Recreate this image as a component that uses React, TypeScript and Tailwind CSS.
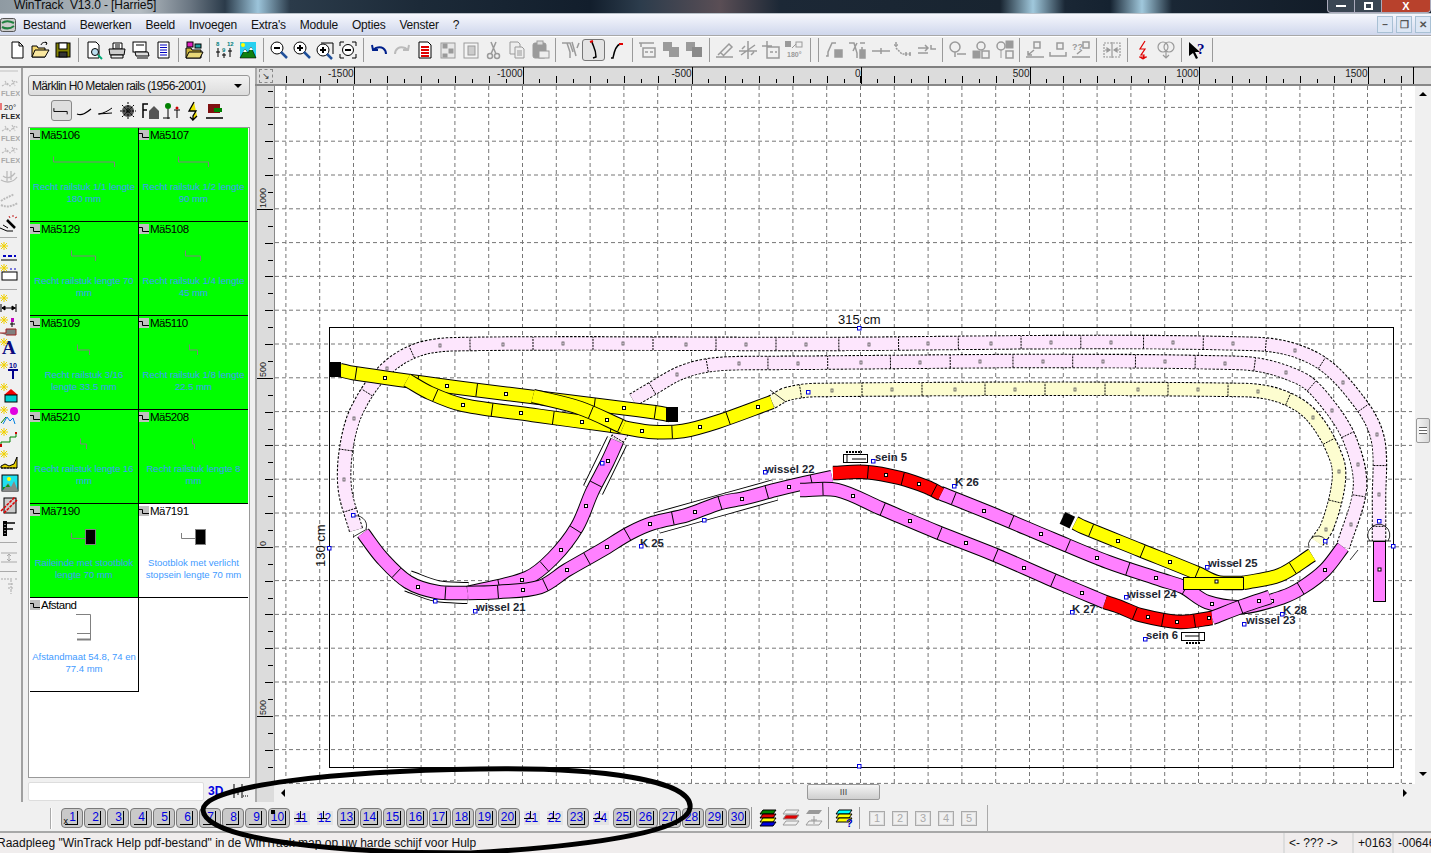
import type { ReactNode } from "react";

const FONT = "font-['Liberation_Sans',Arial,sans-serif]";
const G = "#9a9a9a";

type Pt = [number, number];

// smooth line through the points, also returns samples for the sleepers
function spline(pts: Pt[]) {
  let d = `M${pts[0][0]} ${pts[0][1]}`;
  const samples: Pt[] = [];
  const tangent = (a: Pt, b: Pt): Pt => {
    const l = Math.hypot(b[0] - a[0], b[1] - a[1]) || 1;
    return [(b[0] - a[0]) / l, (b[1] - a[1]) / l];
  };
  for (let i = 0; i < pts.length - 1; i++) {
    const p0 = pts[Math.max(i - 1, 0)];
    const p1 = pts[i];
    const p2 = pts[i + 1];
    const p3 = pts[Math.min(i + 2, pts.length - 1)];
    const len = Math.hypot(p2[0] - p1[0], p2[1] - p1[1]) / 3;
    const t1 = tangent(p0, p2);
    const t2 = tangent(p1, p3);
    const c1: Pt = [p1[0] + t1[0] * len, p1[1] + t1[1] * len];
    const c2: Pt = [p2[0] - t2[0] * len, p2[1] - t2[1] * len];
    d += ` C${c1[0]} ${c1[1]} ${c2[0]} ${c2[1]} ${p2[0]} ${p2[1]}`;
    const steps = Math.max(8, Math.ceil(len));
    for (let k = 0; k < steps; k++) {
      const t = k / steps;
      const u = 1 - t;
      samples.push([
        u * u * u * p1[0] + 3 * u * u * t * c1[0] + 3 * u * t * t * c2[0] + t * t * t * p2[0],
        u * u * u * p1[1] + 3 * u * u * t * c1[1] + 3 * u * t * t * c2[1] + t * t * t * p2[1],
      ]);
    }
  }
  samples.push(pts[pts.length - 1]);
  return { d, samples };
}

function Track({ pts, color, faded, seg = 61, start = 0, w = 13 }: { pts: Pt[]; color: string; faded?: boolean; seg?: number; start?: number; w?: number }) {
  const { d, samples } = spline(pts);
  const marks: ReactNode[] = [];
  let dist = 0;
  let next = start;
  let half = start + seg / 2;
  for (let i = 1; i < samples.length; i++) {
    const [x0, y0] = samples[i - 1];
    const [x1, y1] = samples[i];
    const len = Math.hypot(x1 - x0, y1 - y0);
    dist += len;
    const nx = -(y1 - y0) / (len || 1);
    const ny = (x1 - x0) / (len || 1);
    if (dist >= next) {
      marks.push(
        <line key={`t${i}`} x1={x1 + (nx * w) / 2} y1={y1 + (ny * w) / 2} x2={x1 - (nx * w) / 2} y2={y1 - (ny * w) / 2} stroke="#000" strokeWidth="1" strokeDasharray={faded ? "2 1" : undefined} />,
      );
      next += seg;
    }
    if (dist >= half) {
      marks.push(
        faded ? (
          <rect key={`s${i}`} x={Math.round(x1) - 1} y={Math.round(y1) - 1} width="2" height="3" fill="none" stroke="#555" strokeWidth="0.8" />
        ) : (
          <rect key={`s${i}`} x={Math.round(x1) - 1.5} y={Math.round(y1) - 1.5} width="3" height="3" fill="#fff" stroke="#000" strokeWidth="1" />
        ),
      );
      half += seg;
    }
  }
  return (
    <g fill="none">
      <path d={d} stroke="#000" strokeWidth={w + 1.5} strokeDasharray={faded ? "2.5 1.5" : undefined} />
      <path d={d} stroke={color} strokeWidth={w - 0.5} />
      {marks}
    </g>
  );
}

// contact rail: white sleeve drawn under a track
function Sleeve({ pts }: { pts: Pt[] }) {
  const { d } = spline(pts);
  return (
    <g fill="none">
      <path d={d} stroke="#000" strokeWidth="22" />
      <path d={d} stroke="#fff" strokeWidth="20" />
    </g>
  );
}

const Handle = ({ x, y }: { x: number; y: number }) => <rect x={x - 1.5} y={y - 1.5} width="3.5" height="3.5" fill="#fff" stroke="#0000e0" strokeWidth="1" />;

const labels: [string, number, number, number, number][] = [
  ["wissel 21", 476, 611, 475, 611],
  ["K 25", 640, 547, 641, 546],
  ["wissel 22", 765, 473, 765, 472],
  ["sein 5", 875, 461, 873, 461],
  ["K 26", 955, 486, 954, 486],
  ["K 27", 1072, 613, 1072, 612],
  ["wissel 24", 1127, 598, 1126, 597],
  ["sein 6", 1146, 639, 1145, 639],
  ["wissel 25", 1208, 567, 1207, 567],
  ["wissel 23", 1246, 624, 1244, 624],
  ["K 28", 1283, 614, 1282, 614],
];

function Canvas() {
  const xs = Array.from({ length: 34 }, (_, i) => 285.9 + i * 33.8);
  const ys = Array.from({ length: 21 }, (_, i) => 107.4 + i * 33.8);
  const pink = "#ff80ff";
  const pale = "#fde6fd";
  const paleY = "#fdfdd0";
  const yellow = "#ffff00";
  const red = "#ff0000";
  return (
    <svg className="block bg-white" width="1141" height="698" viewBox="274 86 1141 698">
      <line x1="274.5" x2="274.5" y1="86" y2="784" stroke="#888" />
      {xs.map((x) => (
        <line key={x} x1={x} x2={x} y1="86" y2="784" stroke="#777" strokeDasharray="4 3" />
      ))}
      {ys.map((y) => (
        <line key={y} x1="275" x2="1412" y1={y} y2={y} stroke="#777" strokeDasharray="4 3" />
      ))}
      <rect x="329.5" y="327.5" width="1064" height="440" fill="none" stroke="#000" />
      <text x="838" y="324" fontSize="13" fill="#111" fontFamily="Liberation Sans">315 cm</text>
      <text x="325" y="567" fontSize="13" fill="#111" fontFamily="Liberation Sans" transform="rotate(-90 325 567)">130 cm</text>

      {/* faded tracks on the hidden level */}
      <Track faded color={pale} start={20} pts={[[356, 530], [345, 490], [346, 450], [357, 410], [385, 370], [420, 349], [467, 344], [800, 344], [1257, 344], [1317, 360], [1360, 403], [1378, 440], [1379, 500], [1379, 541]]} />
      <Track faded color={pale} start={20} pts={[[633, 400], [650, 390], [680, 373], [710, 365], [753, 363], [1240, 363], [1300, 378], [1327, 403], [1350, 440], [1360, 487], [1343, 547]]} />
      <Track faded color={paleY} start={30} pts={[[772, 402], [787, 394], [817, 390], [1243, 390], [1283, 397], [1313, 417], [1337, 460], [1338, 487], [1327, 527], [1317, 542]]} />
      <Track faded color={pale} seg={30} pts={[[617, 440], [623, 430]]} />
      <g fill="none" stroke="#000" strokeWidth="0.8">
        <path d="M352 517a10 10 0 0 1 14 12M1370 541a9 9 0 0 1 0-12a9 9 0 0 1 18 12M1309 548a9 9 0 0 1 10-12a9 9 0 0 1 8 9" />
        <path d="M1367 541H1391M770 390l16 12M1350 560l8 -10M353 537l14-8" />
      </g>

      {/* contact sleeves */}
      <Sleeve pts={[[408, 581], [437, 591], [468, 593]]} />
      <Sleeve pts={[[617, 441], [593, 490]]} />
      <Sleeve pts={[[657, 523], [775, 490]]} />

      {/* pink main lines */}
      <Track color={pink} seg={52} start={52} pts={[[363, 533], [382, 558], [408, 582], [437, 592], [468, 593]]} />
      <Track color={pink} seg={50} start={30} pts={[[468, 593], [527, 578], [553, 558], [577, 527], [592, 492], [607, 463], [617, 441]]} />
      <Track color={pink} seg={48} start={30} pts={[[468, 593], [498, 592], [540, 587], [567, 570], [602, 550], [630, 533], [653, 523], [687, 515], [720, 503], [745, 498], [775, 490], [800, 484], [832, 477]]} />
      <Track color={pink} seg={62} start={22} pts={[[800, 490], [837, 490], [880, 508], [937, 532], [993, 554], [1048, 578], [1093, 597], [1105, 602]]} />
      <Track color={pink} seg={62} start={14} pts={[[940, 493], [995, 515], [1052, 539], [1108, 562], [1162, 580], [1183, 587], [1207, 602], [1243, 607], [1283, 597], [1303, 587], [1325, 570], [1343, 547]]} />
      <Track color={pink} seg={40} start={30} pts={[[1212, 618], [1243, 606], [1270, 597]]} />
      <Track color={red} seg={34} start={34} pts={[[833, 473], [865, 472], [900, 478], [927, 487], [941, 494]]} />
      <Track color={red} seg={30} start={30} pts={[[1105, 602], [1120, 607], [1140, 615], [1180, 622], [1212, 618]]} />
      <rect x="1373.5" y="541.5" width="12" height="60" fill={pink} stroke="#000" />
      <rect x="1378" y="568" width="3" height="3" fill="#fff" stroke="#000" />

      {/* yellow */}
      <Track color={yellow} seg={60} start={16} pts={[[340, 370], [353, 373], [453, 387], [533, 397], [653, 412], [670, 415]]} />
      <Track color={yellow} seg={60} start={30} pts={[[407, 380], [430, 393], [463, 405], [533, 415], [620, 427], [653, 432], [683, 431], [717, 422], [772, 402]]} />
      <Track color={yellow} seg={30} start={60} pts={[[533, 396], [580, 408], [623, 427]]} />
      <Track color={yellow} seg={57} start={16} pts={[[1075, 523], [1083, 527], [1140, 550], [1197, 573], [1217, 582], [1243, 583]]} />
      <Track color={yellow} seg={56} start={50} pts={[[1243, 583], [1280, 575], [1312, 555]]} />
      <rect x="1183.5" y="577.5" width="60" height="12" fill={yellow} stroke="#000" />
      <rect x="1215" y="580" width="3" height="3" fill="#fff" stroke="#000" />
      <rect x="330" y="362" width="11" height="15" fill="#000" />
      <rect x="666" y="407" width="12" height="15" fill="#000" />
      <rect x="1062" y="514" width="11" height="13" fill="#000" transform="rotate(25 1068 520)" />

      {/* signals */}
      <g fill="#fff" stroke="#000" strokeWidth="1">
        <rect x="843.5" y="454.5" width="24" height="8" />
        <path d="M847 454v8M852 459h14" fill="none" />
        <rect x="1181.5" y="632.5" width="23" height="8" />
        <path d="M1199 632v8M1185 636h14" fill="none" />
      </g>
      <path d="M846 452h16M1186 643h14" stroke="#000" strokeWidth="2" strokeDasharray="2 1" />

      {labels.map(([t, x, y, hx, hy]) => (
        <g key={t}>
          <text x={x} y={y} fontSize="11.3" fontWeight="700" fill="#1c2530" fontFamily="Liberation Sans">{t}</text>
          <Handle x={hx} y={hy} />
        </g>
      ))}
      {[[859, 328], [329, 548], [859, 766], [1393, 546], [602, 463], [353, 515], [808, 392], [704, 520], [1325, 541], [1379, 521], [435, 601]].map(([x, y]) => (
        <Handle key={`${x}-${y}`} x={x} y={y} />
      ))}
    </svg>
  );
}

function HRuler() {
  const ticks = Array.from({ length: 34 }, (_, i) => i);
  const main = [-1500, -1000, -500, 0, 500, 1000, 1500];
  return (
    <svg className="block" width="1157" height="20" viewBox="274 66 1157 20">
      {ticks.map((i) => {
        const x = Math.round(285.9 + i * 33.8) + 0.5;
        return <line key={i} x1={x} x2={x} y1="76" y2="83" stroke="#000" />;
      })}
      {ticks.map((i) => {
        const x = Math.round(302.8 + i * 33.8) + 0.5;
        return x < 1410 ? <line key={i} x1={x} x2={x} y1="79" y2="83" stroke="#000" /> : null;
      })}
      {main.map((v) => {
        const x = Math.round(860.5 + (v / 500) * 169) + 0.5;
        return (
          <g key={v}>
            <line x1={x} x2={x} y1="67" y2="84" stroke="#000" />
            <text x={x - 1} y="77" textAnchor="end" fontSize="10" fill="#222" fontFamily="Liberation Sans">{v}</text>
          </g>
        );
      })}
      <line x1="1413.5" x2="1413.5" y1="67" y2="84" stroke="#000" />
    </svg>
  );
}

function VRuler() {
  const ticks = Array.from({ length: 21 }, (_, i) => i);
  const main: [string, number][] = [["1000", 209], ["500", 378], ["0", 547], ["500", 716]];
  return (
    <svg className="block" width="19" height="698" viewBox="255 86 19 698">
      {ticks.map((i) => {
        const y = Math.round(107.4 + i * 33.8) + 0.5;
        return <line key={i} x1="265" x2="273" y1={y} y2={y} stroke="#000" />;
      })}
      {ticks.map((i) => {
        const y = Math.round(90.5 + i * 33.8) + 0.5;
        return <line key={i} x1="268" x2="273" y1={y} y2={y} stroke="#000" />;
      })}
      {main.map(([t, y]) => (
        <g key={y}>
          <line x1="257" x2="273" y1={y + 0.5} y2={y + 0.5} stroke="#000" />
          <text x="266" y={y - 1} fontSize="9" fill="#222" fontFamily="Liberation Sans" transform={`rotate(-90 266 ${y - 1})`}>{t}</text>
        </g>
      ))}
    </svg>
  );
}

/* ---------- toolbar glyphs, 20x20 ---------- */
const ic: Record<string, ReactNode> = {
  new: <path d="M5 2h7l4 4v12H5zM12 2v4h4" fill="#fff" stroke="#000" />,
  open: <g stroke="#000"><path d="M2 17V6h5l1 2h7v9z" fill="#f5d76e" /><path d="M2 17l3-7h14l-4 7z" fill="#f9e79f" /><path d="M11 5c1-3 4-3 6-2m0 0l-2-1m2 1l-1 2" fill="none" /></g>,
  save: <g stroke="#000"><rect x="3" y="3" width="14" height="14" fill="#808000" /><rect x="6" y="3" width="8" height="6" fill="#fff" /><rect x="6" y="12" width="8" height="5" fill="#333" /></g>,
  preview: <g stroke="#000"><path d="M4 2h8l3 3v13H4z" fill="#fff" /><circle cx="11" cy="12" r="3.5" fill="#bde" /><path d="M14 15l4 4" stroke="#0a7" strokeWidth="2" /></g>,
  print: <g stroke="#000"><path d="M6 3h9v6H6z" fill="#fff" /><path d="M2 9h16l-1 6H3z" fill="#ccc" /><path d="M4 15h12v3H4zM8 5h5M8 7h5" fill="#eee" /></g>,
  screen: <g stroke="#000"><rect x="3" y="2" width="13" height="10" fill="#fff" /><path d="M5 12h13l1 4H6zM7 18h11M6 5h8" fill="#ddd" /></g>,
  list: <g><path d="M5 2h11v16H5z" fill="#fff" stroke="#000" /><path d="M7 5h7M7 7.5h7M7 10h7M7 12.5h7M7 15h7" stroke="#0000c0" /></g>,
  colorfolder: <g stroke="#000"><path d="M2 18V8h5l1 2h9v8z" fill="#c9b23c" /><rect x="3" y="2" width="6" height="5" fill="#e020c0" /><rect x="11" y="4" width="6" height="4" fill="#20a0a0" /><path d="M2 18l3-6h14l-3 6z" fill="#e8d878" /></g>,
  nums: <g fontFamily="Liberation Sans" fontSize="6" fontWeight="700" fill="#008080"><text x="1" y="6">8</text><text x="7" y="12">9</text><text x="12" y="6">12</text><path d="M3 8v9M9 13v5M15 8v9M1 12h4M7 15h4M13 11h4" stroke="#000" fill="none" /></g>,
  land: <g><rect x="2" y="2" width="16" height="16" fill="#28d0f0" /><path d="M2 18l5-9 3 4 3-6 5 11z" fill="#108010" stroke="#000" strokeWidth="0.6" /><path d="M7 9l-2 3h4zM13 7l-2 3h4z" fill="#fff" /><circle cx="5" cy="5" r="2" fill="#ff0" /></g>,
  zm: <g stroke="#000"><circle cx="8" cy="8" r="6" fill="#fff" /><path d="M5 8h6" strokeWidth="2" /><path d="M12 12l6 6" stroke="#20509a" strokeWidth="2.5" /></g>,
  zp: <g stroke="#000"><circle cx="8" cy="8" r="6" fill="#fff" /><path d="M5 8h6M8 5v6" strokeWidth="2" /><path d="M12 12l6 6" stroke="#20509a" strokeWidth="2.5" /></g>,
  zb: <g stroke="#000"><path d="M6 3h12v11" fill="none" /><circle cx="8" cy="10" r="6" fill="#fff" /><path d="M5 10h6M8 7v6" strokeWidth="2" /><path d="M12 14l5 5" stroke="#20509a" strokeWidth="2.5" /></g>,
  zf: <g stroke="#000" fill="none"><path d="M2 6V2h4M14 2h4v4M2 14v4h4M14 18h4v-4" /><circle cx="10" cy="10" r="5.5" fill="#fff" /><path d="M7 10h6" strokeWidth="2" /></g>,
  undo: <path d="M17 14c0-5-4-8-10-6L4 10M3 5l1 5 5 0" fill="none" stroke="#00208c" strokeWidth="2" />,
  redo: <path d="M3 14c0-5 4-8 10-6l3 2M17 5l-1 5-5 0" fill="none" stroke="#bbb" strokeWidth="2" />,
  docr: <g><path d="M4 2h9l3 3v13H4z" fill="#fff" stroke="#000" /><path d="M6 7h8M6 10h8M6 13h8M6 16h8" stroke="#e00000" strokeWidth="2" /></g>,
  g1: <g fill={G} stroke={G}><rect x="3" y="3" width="14" height="15" fill="#e8e8e8" /><rect x="5" y="4" width="4" height="4" /><rect x="11" y="9" width="4" height="4" /><rect x="5" y="14" width="4" height="3" /></g>,
  g2: <g stroke={G}><rect x="3" y="3" width="14" height="15" fill="#f4f4f4" /><rect x="7" y="6" width="7" height="9" fill="#ccc" /></g>,
  cut: <g fill="none" stroke={G} strokeWidth="1.5"><circle cx="6" cy="16" r="2.5" /><circle cx="13" cy="16" r="2.5" /><path d="M7 14L12 2M12 14L7 2" /></g>,
  copy: <g fill="#eee" stroke={G}><path d="M3 2h8l2 2v10H3z" /><path d="M8 7h7l2 2v9H8z" /><path d="M10 11h5M10 13h5M10 15h5" /></g>,
  paste: <g stroke={G}><rect x="3" y="3" width="13" height="15" rx="2" fill={G} /><rect x="7" y="1" width="6" height="4" fill="#ddd" /><rect x="9" y="11" width="10" height="7" fill="#eee" /></g>,
  yg: <g fill="none" stroke={G} strokeWidth="1.5"><path d="M1 3h5l3 9v6M18 3l-2 5M11 2l4 14M6 3h3l3 9" /></g>,
  sel: <g fill="none"><path d="M8 2c1 4 4 7 4 15l-3 1" stroke="#000" strokeWidth="1.5" /><path d="M6 2l3-1" stroke="#e00000" strokeWidth="2" /></g>,
  curve: <g fill="none"><path d="M4 18h2c1-5 2-12 7-14" stroke="#000" strokeWidth="1.5" /><path d="M12 4h4" stroke="#e00000" strokeWidth="2" /></g>,
  a1: <g fill="none" stroke={G} strokeWidth="1.5"><path d="M1 3h15M3 3v4M5 8h12v9H5z" /><path d="M7 12h3M12 12h3" /></g>,
  a2: <g fill={G}><rect x="2" y="2" width="9" height="9" /><rect x="8" y="7" width="10" height="10" /></g>,
  a3: <g fill={G}><rect x="2" y="2" width="9" height="9" /><rect x="8" y="7" width="10" height="10" fill="#8a8a8a" /></g>,
  b1: <g fill="none" stroke={G} strokeWidth="1.5"><path d="M1 17h17M3 15L14 4l3 3-9 9M5 12l3 3" /></g>,
  b2: <g fill="none" stroke={G} strokeWidth="1.5"><path d="M1 11h18M10 1v18M3 15L17 5M7 6l-3 3M13 15l3-3" /></g>,
  b3: <g fill="none" stroke={G} strokeWidth="1.5"><path d="M1 6h10M6 1v10M6 7h12v11H6zM9 12h3M14 12h2" /></g>,
  b4: <g><rect x="1" y="1" width="6" height="6" fill={G} /><rect x="12" y="2" width="6" height="5" fill="none" stroke={G} /><path d="M8 8l4-4" stroke={G} /><text x="3" y="17" fontSize="7" fontFamily="Liberation Sans" fill={G} fontWeight="700">180°</text></g>,
  c1: <g fill="none" stroke={G} strokeWidth="1.5"><path d="M1 16h2v-4l4-9h4" /><rect x="10" y="10" width="7" height="7" fill={G} /></g>,
  c2: <g fill="none" stroke={G} strokeWidth="1.5"><path d="M1 3h5l3 10v5M9 3l-4 8M12 3h5M14 7v11" /><rect x="12" y="10" width="5" height="8" fill={G} /></g>,
  c3: <path d="M1 11h18M10 8v6" stroke={G} strokeWidth="1.5" fill="none" />,
  c4: <g fill="none" stroke={G} strokeWidth="1.5"><path d="M2 2v6l6 6h9" strokeDasharray="2 1" /><path d="M0 5h4M12 12v4M16 12v4" /></g>,
  c5: <g fill="none" stroke={G} strokeWidth="1.5"><path d="M1 8h10M1 13h10M8 5l3 3-3 3M14 5v4h5" /></g>,
  d1: <g fill="none" stroke={G} strokeWidth="1.5"><circle cx="7" cy="7" r="5" /><path d="M7 12v5M9 14h9" /></g>,
  d2: <g stroke={G}><circle cx="10" cy="6" r="4" fill="none" strokeWidth="1.5" /><rect x="2" y="11" width="7" height="7" fill={G} /><rect x="11" y="11" width="7" height="7" fill="none" strokeWidth="1.5" /></g>,
  d3: <g stroke={G}><circle cx="7" cy="6" r="4" fill="none" strokeWidth="1.5" /><rect x="12" y="1" width="7" height="7" fill={G} /><rect x="12" y="11" width="7" height="7" fill="none" strokeWidth="1.5" /><path d="M7 10v8" /></g>,
  e1: <g fill="none" stroke={G} strokeWidth="1.5"><rect x="9" y="2" width="6" height="6" /><path d="M1 17h18M9 10l-6 5M3 11v4h4" /></g>,
  e2: <g fill="none" stroke={G} strokeWidth="1.5"><rect x="9" y="3" width="6" height="6" /><path d="M2 12v4h16v-4" /></g>,
  e3: <g fill="none" stroke={G} strokeWidth="1.5"><rect x="12" y="2" width="6" height="6" /><path d="M1 17h18M11 10l-5 4" /><text x="1" y="10" fontSize="9" fontFamily="Liberation Sans" fontWeight="700" fill={G} stroke="none">??</text></g>,
  f1: <g fill="none" stroke={G} strokeWidth="1.2"><rect x="2" y="3" width="16" height="14" strokeDasharray="2 1" /><path d="M10 2v16M3 10h5M12 10h5" /><path d="M5 8l3 2-3 2zM15 8l-3 2 3 2z" fill={G} /></g>,
  bolt: <path d="M12 1L7 9h5l-4 6h3l-1 4m-4-2h8M10 19l-3-2M10 19l3-2" fill="none" stroke="#e00000" strokeWidth="1.2" />,
  tree: <g fill="none" stroke={G} strokeWidth="1.2"><circle cx="7" cy="7" r="5" /><circle cx="13" cy="7" r="5" /><path d="M10 10v8M7 15l3 3 3-3" /></g>,
  help: <g><path d="M2 2v14l4-3 3 6 2-1-3-6h5z" fill="#000" /><text x="10" y="14" fontSize="15" fontWeight="700" fontFamily="Liberation Serif" fill="#000080">?</text></g>,
};

const Ico = ({ n }: { n: string }) => (
  <svg width="20" height="20" viewBox="0 0 20 20" className="block">
    {ic[n]}
  </svg>
);

const topBar = "new open save | preview print screen list | colorfolder | nums land | zm zp zb zf | undo redo docr g1 g2 cut copy paste | yg sel curve | a1 a2 a3 | b1 b2 b3 b4 || c1 c2 c3 c4 c5 | d1 d2 d3 | e1 e2 e3 | f1 | bolt tree | help |".split(" ");

function TopToolbar() {
  return (
    <div className="flex h-[31px] shrink-0 items-center border-t border-[#a8a8a8] bg-[#f0f0f0] pb-[2px] pl-[5px] shadow-[inset_0_1px_0_#fff]">
      {topBar.map((n, i) =>
        n === "|" || n === "||" ? (
          <div key={i} className={`flex h-[24px] ${n === "||" ? "mx-[4.5px] gap-[7px]" : "mx-[3.5px]"}`}>
            <div className="w-px bg-[#9a9a9a]" />
            {n === "||" && <div className="w-px bg-[#9a9a9a]" />}
          </div>
        ) : (
          <div key={i} className={`flex h-[22px] w-[23px] items-center justify-center ${n === "sel" ? "rounded-[3px] border border-[#777] bg-[#e4e4e4]" : ""}`}>
            <Ico n={n} />
          </div>
        ),
      )}
    </div>
  );
}

/* ---------- left strip ---------- */
const Flex = ({ top }: { top?: string }) => (
  <svg width="20" height="20" viewBox="0 0 20 20" className="block">
    <path d="M2 8l5-3 3 3 5-5 3 2M5 3l3 5M12 2l3 6" fill="none" stroke={top ?? "#bbb"} strokeWidth="1.2" strokeDasharray="2 1" />
    <text x="1" y="18" fontSize="7.5" fontWeight="700" fontFamily="Liberation Sans" fill={top ? "#222" : "#aaa"}>FLEX</text>
  </svg>
);
const Spark = () => <path d="M1 1l6 6M7 1L1 7M4 0v8M0 4h8" stroke="#f0d000" strokeWidth="1" />;

const strip: ReactNode[] = [
  <Flex />,
  <svg width="20" height="20" viewBox="0 0 20 20" className="block"><text x="4" y="9" fontSize="8" fontFamily="Liberation Sans" fill="#222">20°</text><path d="M1 2v7" stroke="#e00000" /><text x="1" y="18" fontSize="7.5" fontWeight="700" fontFamily="Liberation Sans" fill="#222">FLEX</text></svg>,
  <Flex />,
  <Flex />,
  <svg width="20" height="20" viewBox="0 0 20 20" className="block"><path d="M1 12c5 3 12 3 16-3M3 8c4 3 8 2 12-3M7 3v10M11 3v9" fill="none" stroke="#bbb" strokeWidth="1.3" /></svg>,
  <svg width="20" height="20" viewBox="0 0 20 20" className="block"><path d="M1 11c5-4 9-4 13-7M1 15c7 3 11 1 17-2" fill="none" stroke="#bbb" strokeWidth="2" strokeDasharray="2 1" /></svg>,
  <svg width="20" height="20" viewBox="0 0 20 20" className="block"><path d="M0 15l7 3h6M3 12l5 3" stroke="#000" fill="none" /><path d="M7 7l8 8" stroke="#000" strokeWidth="2.5" /><path d="M9 3l1 2M13 2v2M15 5l2-1" stroke="#c02020" /></svg>,
  "-",
  <svg width="20" height="20" viewBox="0 0 20 20" className="block"><Spark /><path d="M3 14h3M8 14h4M14 14h2" stroke="#0000c0" strokeWidth="2" /><path d="M1 18h16" stroke="#000" /></svg>,
  <svg width="20" height="20" viewBox="0 0 20 20" className="block"><Spark /><path d="M10 5h2M14 5h2" stroke="#0000c0" /><rect x="2" y="8" width="15" height="8" fill="#fff" stroke="#000" /></svg>,
  "-",
  <svg width="20" height="20" viewBox="0 0 20 20" className="block"><Spark /><path d="M2 14h14M1 10v8M16 10v8M2 14l3-2v4zM15 14l-3-2v4z" stroke="#000" fill="#000" /></svg>,
  <svg width="20" height="20" viewBox="0 0 20 20" className="block"><Spark /><rect x="11" y="2" width="3" height="4" fill="#c000c0" /><path d="M12 6v5M10 8h5" stroke="#000" /><path d="M0 17h6v-4h10v6H6" fill="#808080" stroke="#a02020" /></svg>,
  <div className="relative h-[20px] w-[20px]"><span className="absolute left-[2px] top-0 font-['Liberation_Serif'] text-[19px] font-bold leading-[20px] text-[#0a0a80]">A</span><svg width="9" height="9" viewBox="0 0 9 9" className="absolute left-0 top-0"><Spark /></svg></div>,
  <svg width="20" height="20" viewBox="0 0 20 20" className="block"><Spark /><text x="9" y="7" fontSize="7" fontWeight="700" fontFamily="Liberation Sans" fill="#00008c">10</text><path d="M8 9h10M13 9v9" stroke="#00008c" strokeWidth="2" /></svg>,
  <svg width="20" height="20" viewBox="0 0 20 20" className="block"><Spark /><path d="M4 12l7-6 7 6z" fill="#f00000" /><rect x="5" y="12" width="12" height="7" fill="#00d0d0" stroke="#000" /></svg>,
  <svg width="20" height="20" viewBox="0 0 20 20" className="block"><Spark /><circle cx="14" cy="5" r="4" fill="#e000e0" /><path d="M3 18l4-7 3 4 3-3 2 6" fill="none" stroke="#0080e0" /><path d="M1 17l5-6" stroke="#008000" /></svg>,
  <svg width="20" height="20" viewBox="0 0 20 20" className="block"><Spark /><path d="M1 17v-3h9V9h6V6" fill="none" stroke="#008000" /><rect x="0" y="16" width="2" height="3" fill="#c00" /><rect x="15" y="4" width="2" height="2" fill="#c00" /></svg>,
  <svg width="20" height="20" viewBox="0 0 20 20" className="block"><Spark /><path d="M1 16l4-2 4 2 5-2 3-7v11H1z" fill="#e8d000" stroke="#000" /><path d="M1 18h16" stroke="#000" strokeDasharray="2 1" /></svg>,
  <svg width="20" height="20" viewBox="0 0 20 20" className="block"><rect x="2" y="2" width="16" height="16" fill="#20e0f0" stroke="#000" /><path d="M2 18l6-8 3 4 3-6 4 10z" fill="#888" /><path d="M3 17l5-6 2 3h-7z" fill="#109010" /><circle cx="9" cy="6" r="2" fill="#ff0" /></svg>,
  <svg width="20" height="20" viewBox="0 0 20 20" className="block"><rect x="4" y="3" width="12" height="15" fill="#ccc" stroke="#000" /><path d="M1 16L15 2M4 18L17 5" stroke="#e00000" strokeWidth="1.5" strokeDasharray="3 1" /></svg>,
  <svg width="20" height="20" viewBox="0 0 20 20" className="block"><rect x="3" y="3" width="4" height="15" fill="#000" /><path d="M5 5h10M5 11h8M4 6v10" stroke="#000" strokeWidth="1.5" /><path d="M5 6v11" stroke="#fff" strokeDasharray="1 2" /></svg>,
  "-",
  <svg width="20" height="20" viewBox="0 0 20 20" className="block"><path d="M1 6h16M1 15h16M9 7v7M7 9l2-2 2 2M7 12l2 2 2-2" fill="none" stroke="#aaa" /></svg>,
  "-",
  <svg width="20" height="20" viewBox="0 0 20 20" className="block"><path d="M1 3h11M15 3h2M11 4v10M8 8h6M8 12h6M11 14v4" fill="none" stroke="#aaa" strokeDasharray="2 1" /></svg>,
];

function LeftStrip() {
  return (
    <div className="flex w-[23px] shrink-0 flex-col items-start border-r-2 border-[#a0a0a0] bg-[#f0f0f0] pt-[2px]">
      <div className="mb-[5px] h-[2px] w-[18px] bg-[#d8d8d8]" />
      {strip.map((it, i) =>
        it === "-" ? (
          <div key={i} className="my-[3px] h-px w-[17px] bg-[#aaa]" />
        ) : (
          <div key={i} className="flex h-[22.4px] w-[20px] items-center justify-center">
            {it}
          </div>
        ),
      )}
    </div>
  );
}

/* ---------- part catalogue ---------- */
type Part = { id: string; text: string[]; w: number; h: number; green: boolean; stop?: boolean; gauge?: boolean };

const parts: Part[] = [
  { id: "Mä5106", text: ["Recht railstuk 1/1 lengte", "180 mm"], w: 61, h: 10, green: true },
  { id: "Mä5107", text: ["Recht railstuk 1/2 lengte", "90 mm"], w: 30, h: 10, green: true },
  { id: "Mä5129", text: ["Recht railstuk lengte 70", "mm"], w: 24, h: 10, green: true },
  { id: "Mä5108", text: ["Recht railstuk 1/4 lengte", "45 mm"], w: 15, h: 10, green: true },
  { id: "Mä5109", text: ["Recht railstuk 3/16", "lengte 33.5 mm"], w: 12, h: 10, green: true },
  { id: "Mä5110", text: ["Recht railstuk 1/8 lengte", "22.5 mm"], w: 8, h: 10, green: true },
  { id: "Mä5210", text: ["Recht railstuk lengte 16", "mm"], w: 6, h: 10, green: true },
  { id: "Mä5208", text: ["Recht railstuk lengte 8", "mm"], w: 2, h: 10, green: true },
  { id: "Mä7190", text: ["Raileinde met stootblok", "lengte 70 mm"], w: 14, h: 6, green: true, stop: true },
  { id: "Mä7191", text: ["Stootblok met verlicht", "stopsein lengte 70 mm"], w: 14, h: 6, green: false, stop: true },
  { id: "Afstand", text: ["Afstandmaat 54.8, 74 en", "77.4 mm"], w: 15, h: 26, green: false, gauge: true },
];

function PartDrawing({ p }: { p: Part }) {
  if (p.gauge) {
    return (
      <svg width="18" height="28" className="block">
        <path d="M1 1.5h14.5v25H2M2 20.5h13" fill="none" stroke="#808080" />
        <path d="M2 26.5h14" stroke="#808080" strokeWidth="2" />
      </svg>
    );
  }
  if (p.stop) {
    return (
      <svg width="26" height="17" className="block">
        <path d="M0.5 5v5.5h14" fill="none" stroke="#808080" />
        <rect x="14.5" y="1.5" width="10" height="15" fill="#000" stroke="#808080" />
      </svg>
    );
  }
  return (
    <svg width={p.w + 2} height={p.h + 2} className="block">
      <path d={`M0.5 0.5v5.5h${p.w}v5`} fill="none" stroke="#808080" />
    </svg>
  );
}

function PartCell({ p, index }: { p: Part; index: number }) {
  return (
    <div className={`h-[94px] w-full overflow-hidden border-b border-black ${index % 2 === 0 ? "border-r" : ""} ${p.green ? "bg-[#00ff00]" : "bg-white"}`}>
      <div className="flex h-[14px] items-center text-[11.5px] leading-[14px] text-black">
        <svg width="10" height="10" viewBox="0 0 10 10" className="mr-[1px] shrink-0 bg-[#c0c0c0]">
          <path d="M0 3.5h3.5v4H10" fill="none" stroke="#000" />
        </svg>
        <span className="tracking-[-0.5px]">{p.id}</span>
      </div>
      <div className="flex h-[38px] items-start justify-center pt-[14px]">
        <div className={p.gauge ? "-mt-[13px]" : p.stop ? "-mt-[4px]" : ""}>
          <PartDrawing p={p} />
        </div>
      </div>
      <div className="pt-[1px] text-center text-[9.5px] leading-[12px] text-[#3f9bff]">
        {p.text.map((t) => (
          <div key={t} className="whitespace-nowrap">{t}</div>
        ))}
      </div>
    </div>
  );
}

function Panel() {
  const kinds: ReactNode[] = [
    <path d="M2 7v3.5h14v3" fill="none" stroke="#000" />,
    <path d="M1 13c5 2 9-1 14-5" fill="none" stroke="#000" strokeWidth="1.2" />,
    <path d="M1 13l14-1M2 13c5-1 9-3 13-6" fill="none" stroke="#000" />,
    <g><circle cx="9" cy="10" r="6" fill="#555" /><path d="M9 1v18M1 10h16M3 4l12 12M15 4L3 16" stroke="#000" strokeDasharray="2 1" /></g>,
    <g><path d="M2 17V3h5M2 9h4" stroke="#000" strokeWidth="1.5" fill="none" /><path d="M8 10l5-5 5 5v8H8z" fill="#555" /></g>,
    <g><circle cx="6" cy="5" r="3" fill="#008000" /><path d="M6 8v10M1 17h7M12 9h6M15 9v8" stroke="#000" /><circle cx="15" cy="7" r="1.5" fill="#c00" /></g>,
    <path d="M10 1L5 10h7l-3 5v4l4-4M6 16l3 3" fill="#f0e000" stroke="#000" strokeWidth="1.3" />,
    <g><rect x="3" y="3" width="12" height="9" fill="#801010" /><rect x="9" y="7" width="8" height="4" fill="#008000" /><path d="M1 17h17" stroke="#000" strokeWidth="1.5" /></g>,
  ];
  return (
    <div className="flex w-[232px] shrink-0 flex-col bg-[#f0f0f0] pt-[7px]">
      <div className="mx-[5px] flex h-[21px] w-[222px] shrink-0 items-center justify-between rounded-[3px] border border-[#999] bg-[linear-gradient(#f2f2f2,#dcdcdc)] pl-[3px] pr-[7px] text-[12px] tracking-[-0.67px] text-[#111]">
        <span>Märklin H0 Metalen rails (1956-2001)</span>
        <span className="h-0 w-0 border-x-[4px] border-t-[4px] border-x-transparent border-t-black" />
      </div>
      <div className="mt-[3px] flex h-[23px] shrink-0 items-center pl-[28px]">
        {kinds.map((k, i) => (
          <div key={i} className={`flex h-[21px] items-center justify-center ${i === 0 ? "mr-[3px] w-[21px] rounded-[3px] border border-[#888] bg-[#dedede]" : "w-[21.6px]"}`}>
            <svg width="20" height="20" viewBox="0 0 20 20" className="block">{k}</svg>
          </div>
        ))}
      </div>
      <div className="mx-[5px] mt-[5px] h-[651px] w-[222px] shrink-0 overflow-hidden border border-[#999] bg-white pl-px">
        <div className="grid grid-cols-[109px_109px]">
          {parts.map((p, i) => (
            <PartCell key={p.id} p={p} index={i} />
          ))}
        </div>
      </div>
      <div className="mt-[3px] flex h-[20px] items-center pl-[5px]">
        <div className="h-[19px] w-[176px] rounded-[2px] border border-[#ddd] bg-white" />
        <span className="ml-[4px] w-[24px] text-[12px] font-bold text-[#0000e0]">3D</span>
        <svg width="16" height="16" viewBox="0 0 16 16" className="block">
          <path d="M2 1v14M10 1v14M0 8h12M6 7v5" stroke="#000" />
          <path d="M11 13h5" stroke="#000" strokeDasharray="1 1" />
        </svg>
      </div>
    </div>
  );
}

/* ---------- bottom toolbar ---------- */
const flatLevels = [11, 12, 21, 22, 24];
const levels = Array.from({ length: 30 }, (_, i) => i + 1);

function LevelButton({ n }: { n: number }) {
  if (flatLevels.includes(n)) {
    return (
      <div className="flex w-[23px] justify-center">
        <div className="relative flex h-[14px] w-[16px] items-center justify-center bg-[#e4e4e4] text-[12px] text-[#0000e0]">
          {n}
          <span className="absolute left-0 right-[6px] top-[7px] h-px bg-black" />
          <span className="absolute left-[6px] top-0 h-[7px] w-px bg-black" />
        </div>
      </div>
    );
  }
  return (
    <div className="flex w-[23px] justify-center">
      <div className="relative flex h-[20px] w-[22px] items-center justify-center rounded-[4px] border border-[#7a7a7a] bg-[#c9c9c9] text-[12px] text-[#0000e0]">
        <span className="flex h-[14px] min-w-[13px] items-end justify-end border-b border-r border-black pr-px leading-[13px]">{n}</span>
        {n === 1 && <span className="absolute bottom-[1px] left-[2px] text-[9px] leading-[9px] text-black">x</span>}
        {n === 10 && <span className="absolute left-[2px] top-[1px] h-[4px] w-[4px] bg-black" />}
      </div>
    </div>
  );
}

const Layers = ({ kind }: { kind: number }) => {
  const p = (y: number) => `M5 ${y}h13l-3 4H2z`;
  if (kind === 0)
    return (
      <svg width="20" height="20" viewBox="0 0 20 20" className="block">
        <path d={p(2)} fill="#008000" stroke="#000" /><path d={p(6)} fill="#e00000" stroke="#000" /><path d={p(10)} fill="#ffff00" stroke="#000" /><path d={p(14)} fill="#0000e0" stroke="#000" />
      </svg>
    );
  if (kind === 1)
    return (
      <svg width="20" height="20" viewBox="0 0 20 20" className="block">
        <path d={p(2)} fill="none" stroke={G} /><path d={p(7)} fill="#e00000" stroke="#888" /><path d={p(13)} fill="none" stroke={G} />
      </svg>
    );
  if (kind === 2)
    return (
      <svg width="20" height="20" viewBox="0 0 20 20" className="block">
        <path d={p(2)} fill="#999" /><path d="M10 8v8M7 12h6" stroke={G} /><path d={p(13)} fill="none" stroke={G} />
      </svg>
    );
  return (
    <svg width="20" height="20" viewBox="0 0 20 20" className="block">
      <path d={p(2)} fill="#00ffff" stroke="#000" /><path d={p(6)} fill="#ffff00" stroke="#000" /><path d={p(10)} fill="#ffff00" stroke="#000" />
      <text x="12" y="19" fontSize="11" fontWeight="700" fontFamily="Liberation Sans" fill="#0000c0">?</text>
    </svg>
  );
};

function BottomBar() {
  return (
    <div className="flex h-[31px] shrink-0 items-center border-b-2 border-[#a8a8a8] bg-[#f0f0f0] pl-[50px] pt-[3px]">
      <div className="mr-[8px] h-[21px] w-[2px] border-l border-[#aaa] bg-white" />
      {levels.map((n) => (
        <LevelButton key={n} n={n} />
      ))}
      <div className="ml-[1px] h-[22px] w-px bg-[#9a9a9a]" />
      <div className="ml-[4px] flex w-[69px]">
        {[0, 1, 2].map((k) => (
          <div key={k} className="flex w-[23px] justify-center"><Layers kind={k} /></div>
        ))}
      </div>
      <div className="ml-[3px] h-[22px] w-px bg-[#9a9a9a]" />
      <div className="ml-[5px] flex w-[20px] justify-center"><Layers kind={3} /></div>
      <div className="ml-[5px] h-[22px] w-px bg-[#9a9a9a]" />
      <div className="ml-[9px] flex gap-[7px]">
        {[1, 2, 3, 4, 5].map((n) => (
          <div key={n} className="flex h-[15px] w-[16px] items-center justify-center border border-[#aaa] text-[11px] leading-none text-[#aaa] shadow-[inset_0_0_0_1px_#ddd]">
            {n}
          </div>
        ))}
      </div>
      <div className="ml-[10px] h-[26px] w-px bg-[#aaa]" />
    </div>
  );
}

export default function App() {
  return (
    <div className={`relative flex h-[853px] w-[1431px] flex-col overflow-hidden bg-[#f0f0f0] ${FONT}`}>
      {/* glass title bar */}
      <div className="relative flex h-[14px] shrink-0 items-center justify-between border-b border-[#b8c0c8] bg-[linear-gradient(90deg,#8f9aa2_0,#b4bcc2_140px,#6a7682_190px,#2b3b4a_225px,#9cc4da_258px,#2b3b4a_290px,#1c2a38_420px,#121e2c_590px,#2c3c4c_640px,#5a4e55_720px,#1c2836_780px,#182430_1000px,#a0c8dc_1033px,#1a2735_1065px,#152230_1110px,#a0c8dc_1142px,#1a2735_1172px,#121c28_1330px)]">
        <span className="pl-[14px] text-[12px] leading-[12px] tracking-[-0.1px] -translate-y-[2px] text-[#0c0c0c]">WinTrack&nbsp; V13.0 - [Harrie5]</span>
        <div className="flex h-[13px] self-start">
          <div className="flex w-[28px] items-center justify-center rounded-bl-[4px] border border-t-0 border-[#aab] bg-[#3a4653]"><span className="h-[2px] w-[10px] bg-white" /></div>
          <div className="flex w-[27px] items-center justify-center border-b border-r border-[#aab] bg-[#3a4653]"><span className="h-[8px] w-[9px] border-2 border-white" /></div>
          <div className="flex w-[49px] items-center justify-center rounded-br-[4px] border-b border-r border-[#aab] bg-[#b8412c] text-[11px] font-bold leading-none text-white">X</div>
        </div>
      </div>

      {/* menu bar */}
      <div className="flex h-[21px] shrink-0 items-center bg-[linear-gradient(#f6f7fd,#cfd7ec)] text-[12px] tracking-[-0.2px] text-[#111]">
        <svg width="16" height="16" viewBox="0 0 16 16" className="ml-0 mr-[7px] block">
          <rect x="0.5" y="1.5" width="15" height="13" rx="2" fill="#ccc" stroke="#555" />
          <path d="M2 6c4-3 8-2 12 0M2 10c4 2 8 2 12-1" stroke="#208040" strokeWidth="2" fill="none" />
        </svg>
        <div className="flex gap-[14px]">
          {["Bestand", "Bewerken", "Beeld", "Invoegen", "Extra's", "Module", "Opties", "Venster", "?"].map((m) => (
            <span key={m}>{m}</span>
          ))}
        </div>
        <div className="ml-auto flex gap-[3px] text-[#555]">
          {["–", "❐", "✕"].map((g) => (
            <div key={g} className="flex h-[17px] w-[16px] items-center justify-center border border-[#a8c0d4] bg-[#dce6f4] text-[10px] font-bold leading-none">
              {g}
            </div>
          ))}
        </div>
      </div>

      <TopToolbar />

      {/* main work area */}
      <div className="flex min-h-0 flex-1 border-t-2 border-[#808080]">
        <LeftStrip />
        <Panel />
        <div className="flex min-w-0 flex-1 flex-col">
          <div className="flex h-[18px] shrink-0 border-b-2 border-[#888] bg-[#dcdcdc]">
            <div className="flex w-[19px] shrink-0 items-center justify-center border-l-2 border-[#aaa]">
              <div className="flex h-[14px] w-[14px] items-center justify-center border border-dashed border-[#888] text-[9px] leading-none text-[#333]">↘</div>
            </div>
            <div className="-mt-[2px]"><HRuler /></div>
          </div>
          <div className="flex h-[698px] shrink-0">
            <div className="w-[19px] shrink-0 overflow-hidden border-l-2 border-[#aaa] bg-[#dcdcdc]">
              <div className="-ml-[2px]"><VRuler /></div>
            </div>
            <div className="h-[698px] w-[1141px] shrink-0 overflow-hidden">
              <Canvas />
            </div>
            {/* vertical scrollbar */}
            <div className="relative w-[16px] shrink-0 bg-[#f0f0f0]">
              <span className="absolute left-[4px] top-[6px] h-0 w-0 border-x-[4px] border-b-[4px] border-x-transparent border-b-black" />
              <div className="absolute left-[1px] top-[332px] flex h-[25px] w-[14px] items-center justify-center rounded-[2px] border border-[#999] bg-[linear-gradient(90deg,#f4f4f4,#d8d8d8)]">
                <span className="h-[7px] w-[8px] border-y border-[#666] bg-[linear-gradient(#fff_33%,#666_33%,#666_66%,#fff_66%)]" />
              </div>
              <span className="absolute bottom-[8px] left-[4px] h-0 w-0 border-x-[4px] border-t-[4px] border-x-transparent border-t-black" />
            </div>
          </div>
          {/* horizontal scrollbar */}
          <div className="flex h-[18px] shrink-0">
            <div className="w-[19px] shrink-0 border-l-2 border-[#aaa] bg-[#dcdcdc]" />
            <div className="relative flex-1 bg-[#f0f0f0]">
              <span className="absolute left-[7px] top-[5px] h-0 w-0 border-y-[4px] border-r-[4px] border-y-transparent border-r-black" />
              <div className="absolute left-[533px] top-0 flex h-[16px] w-[73px] items-center justify-center rounded-[2px] border border-[#999] bg-[linear-gradient(#f4f4f4,#cfcfcf)] text-[9px] leading-none text-[#444]">III</div>
              <span className="absolute right-[24px] top-[5px] h-0 w-0 border-y-[4px] border-l-[4px] border-y-transparent border-l-black" />
            </div>
          </div>
        </div>
      </div>

      <BottomBar />

      {/* status bar */}
      <div className="flex h-[20px] shrink-0 items-center overflow-hidden bg-[#f0eded] text-[12px] text-[#111]">
        <div className="-ml-[3px] flex-1 whitespace-nowrap">Raadpleeg "WinTrack Help pdf-bestand" in de WinTrack map op uw harde schijf voor Hulp</div>
        <div className="flex h-full w-[69px] items-center border-l-2 border-[#ddd] pl-[4px]">&lt;- ??? -&gt;</div>
        <div className="flex h-full w-[40px] items-center overflow-hidden whitespace-nowrap border-l-2 border-[#ddd] pl-[4px]">+01639</div>
        <div className="flex h-full w-[39px] items-center overflow-hidden whitespace-nowrap border-l-2 border-[#ddd] pl-[4px]">-00646</div>
      </div>

      {/* hand-drawn ring over the level buttons */}
      <svg className="pointer-events-none absolute left-0 top-0" width="1431" height="853" viewBox="0 0 1431 853">
        <path d="M480 769C600 767 694 780 690 808C687 832 590 846 470 853C350 853 205 842 203 810C203 785 340 771 480 769Z" fill="none" stroke="#000" strokeWidth="5" />
      </svg>
    </div>
  );
}
